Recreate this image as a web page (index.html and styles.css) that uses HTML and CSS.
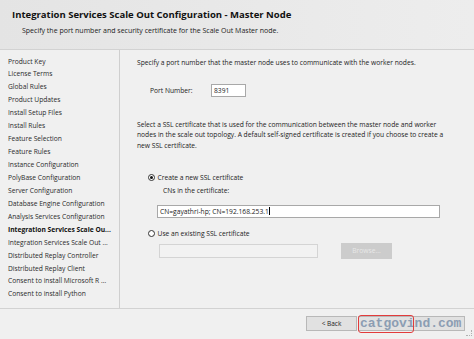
FILE: index.html
```html
<!DOCTYPE html>
<html>
    <head>
        <meta charset="UTF-8">
        <meta name="viewport" content="width=device-width, initial-scale=1.0">
        <link rel="stylesheet" href="styles.css">
    </head>
    <body>
        <div class="header">
            <div class="title">Integration Services Scale Out Configuration - Master Node</div>
            <div class="subtitle">Specify the port number and security certificate for the Scale Out Master node.</div>
        </div>

        <div class="main">
            <div class="sidebar">
                <div class="step">Product Key</div>
                <div class="step">License Terms</div>
                <div class="step">Global Rules</div>
                <div class="step">Product Updates</div>
                <div class="step">Install Setup Files</div>
                <div class="step">Install Rules</div>
                <div class="step">Feature Selection</div>
                <div class="step">Feature Rules</div>
                <div class="step">Instance Configuration</div>
                <div class="step">PolyBase Configuration</div>
                <div class="step">Server Configuration</div>
                <div class="step">Database Engine Configuration</div>
                <div class="step">Analysis Services Configuration</div>
                <div class="step current">Integration Services Scale Ou...</div>
                <div class="step">Integration Services Scale Out ...</div>
                <div class="step">Distributed Replay Controller</div>
                <div class="step">Distributed Replay Client</div>
                <div class="step">Consent to install Microsoft R ...</div>
                <div class="step">Consent to install Python</div>
            </div>

            <div class="content">
                <p class="intro">Specify a port number that the master node uses to communicate with the worker nodes.</p>

                <div class="portRow">
                    <span class="portLabel">Port Number:</span>
                    <span class="textBox portBox">8391</span>
                </div>

                <p class="sslText">Select a SSL certificate that is used for the communication between the master node and worker nodes in the scale out topology. A default self-signed certificate is created if you choose to create a new SSL certificate.</p>

                <div class="radioRow first">
                    <span class="radio checked"></span>
                    <span>Create a new SSL certificate</span>
                </div>
                <div class="cnLabel">CNs in the certificate:</div>
                <div class="textBox cnBox">CN=gayathri-hp; CN=192.168.253.1<span class="caret"></span></div>

                <div class="radioRow second">
                    <span class="radio"></span>
                    <span>Use an existing SSL certificate</span>
                </div>
                <div class="browseRow">
                    <span class="textBox disabledBox"></span>
                    <span class="browseButton">Browse...</span>
                </div>
            </div>
        </div>

        <div class="footer">
            <span class="button">&lt; Back</span>
            <span class="button wide"></span>
            <div class="watermark">catgovind.com</div>
            <div class="redBox"></div>
            <div class="grip"></div>
        </div>
    </body>
</html>
```

FILE: styles.css
```css
body {
    margin: 0;
    width: 474px;
    height: 339px;
    overflow: hidden;
    background-color: #f0f0f0;
    font-family: "Open Sans", "Noto Sans", sans-serif;
    font-size: 6.7px;
    color: #222;
}

.header {
    height: 49px;
    border-bottom: 1px solid #d2d2d2;
    background: linear-gradient(to right, #e4e4e4, #ededed);
}

.title {
    padding: 7px 0 0 12px;
    height: 15px;
    line-height: 15px;
    font-size: 9.5px;
    font-weight: bold;
    color: #111;
}

.subtitle {
    padding: 4px 0 0 22px;
    line-height: 10px;
    font-size: 7px;
}

.main {
    display: flex;
    height: 258px;
}

.sidebar {
    width: 119px;
    border-right: 1px solid #cfcfcf;
    padding-top: 5.5px;
}

.step {
    padding-left: 8px;
    height: 12.95px;
    line-height: 12.95px;
    white-space: nowrap;
    color: #2a2a2a;
}

.step.current {
    font-weight: bold;
    color: #111;
}

.content {
    padding: 6.5px 0 0 17px;
    flex: 1;
}

.content p {
    margin: 0;
    line-height: 10.5px;
}

.intro {
    line-height: 11px !important;
}

.textBox {
    display: block;
    box-sizing: border-box;
    background-color: white;
    border: 1px solid #a8a8a8;
    line-height: 11px;
    padding-left: 2px;
    white-space: nowrap;
}

.portRow {
    display: flex;
    align-items: center;
    margin-top: 16.5px;
    padding-left: 13px;
    height: 13px;
}

.portLabel {
    width: 61px;
}

.portBox {
    width: 35px;
    height: 13px;
}

.sslText {
    margin-top: 22.75px !important;
    width: 316px;
}

.radioRow {
    display: flex;
    align-items: center;
    height: 10px;
    padding-left: 10.5px;
}

.radioRow.first {
    margin-top: 20.75px;
}

.radioRow.second {
    margin-top: 10px;
}

.radio {
    width: 7px;
    height: 7px;
    box-sizing: border-box;
    border: 1px solid #333;
    border-radius: 50%;
    background-color: white;
    margin-right: 3px;
    display: flex;
    align-items: center;
    justify-content: center;
}

.radio.checked::after {
    content: "";
    width: 3px;
    height: 3px;
    border-radius: 50%;
    background-color: #111;
}

.cnLabel {
    margin-top: 4px;
    padding-left: 26px;
    line-height: 10.5px;
}

.cnBox {
    margin: 8.5px 0 0 20px;
    width: 283px;
    height: 13px;
}

.caret {
    display: inline-block;
    width: 1px;
    height: 8px;
    background-color: #000;
    vertical-align: -1px;
}

.browseRow {
    display: flex;
    align-items: center;
    margin: 5px 0 0 22px;
    height: 16px;
}

.disabledBox {
    width: 159px;
    height: 14px;
    background-color: #f2f2f2;
    border-color: #d4d4d4;
}

.browseButton {
    margin-left: 23px;
    width: 51px;
    height: 16px;
    line-height: 16px;
    text-align: center;
    background-color: #cccccc;
    color: #e8e8e8;
}

.footer {
    position: relative;
    border-top: 1px solid #d2d2d2;
    height: 30px;
    display: flex;
    padding: 7px 0 0 306px;
    box-sizing: border-box;
    gap: 1px;
}

.button {
    width: 51px;
    height: 15px;
    line-height: 14px;
    box-sizing: border-box;
    border: 1px solid #b8b8b8;
    background-color: #e1e1e1;
    text-align: center;
    font-size: 6.5px;
}

.button.wide {
    width: 107px;
}

.watermark {
    position: absolute;
    left: 360px;
    top: 6px;
    height: 17px;
    line-height: 17px;
    font-family: "Liberation Mono", "DejaVu Sans Mono", monospace;
    font-size: 13px;
    font-weight: bold;
    color: #8c9db3;
}

.redBox {
    position: absolute;
    left: 358px;
    top: 6px;
    width: 56px;
    height: 18px;
    box-sizing: border-box;
    border: 1.5px solid #e23b3b;
    border-radius: 3px;
}

.grip {
    position: absolute;
    right: 2px;
    bottom: 2px;
    width: 5px;
    height: 5px;
    border-right: 1px dotted #b0b0b0;
    border-bottom: 1px dotted #b0b0b0;
}
```
